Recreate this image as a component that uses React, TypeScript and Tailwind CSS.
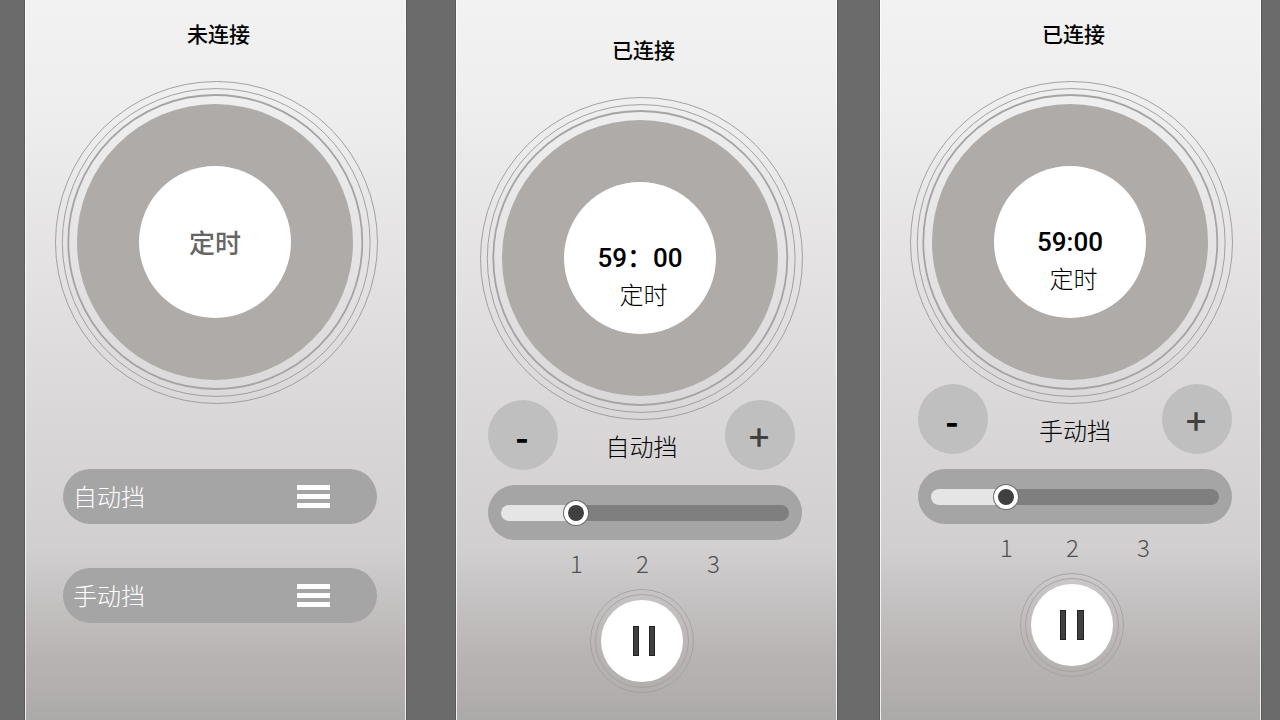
import { useState, type ReactNode } from "react";

function Screen({ title, className, children }: { title: string; className: string; children: ReactNode }) {
  return (
    <section
      className={`min-w-0 flex-1 border-x border-white/80 bg-[linear-gradient(to_bottom,#f2f2f2_0%,#eeeeee_15%,#e5e3e4_35%,#d9d7d8_58%,#d1cfd0_76%,#c9c6c7_81%,#b8b4b3_91%,#acaaa9_100%)] shadow-[0_0_0_1px_#5a5a5a] ${className}`}
    >
      <h1 className="mb-8 pl-1 text-center text-[21px] leading-8 font-medium text-black">{title}</h1>
      {children}
    </section>
  );
}

function Dial({ children }: { children: ReactNode }) {
  return (
    <div className="mx-auto grid w-[323px]">
      <svg viewBox="0 0 323 323" className="col-start-1 row-start-1 block w-full" fill="none" aria-hidden="true">
        <circle cx="161.5" cy="161.5" r="161" stroke="#9a9898" strokeWidth="0.9" />
        <circle cx="161.2" cy="161.5" r="153.9" stroke="#9a9898" strokeWidth="0.9" />
        <circle cx="160.3" cy="161" r="147" stroke="#a5a3a3" strokeWidth="1.8" />
        <circle cx="160" cy="161" r="138" fill="#aeaba9" />
        <circle cx="160" cy="161" r="76" fill="#ffffff" />
      </svg>
      <div className="col-start-1 row-start-1 flex flex-col items-center pt-[143px] pr-[3px] text-[26px] leading-9">
        {children}
      </div>
    </div>
  );
}

function ModeButton({ label }: { label: string }) {
  return (
    <button
      type="button"
      className="flex h-[55px] w-full items-center justify-between rounded-full bg-[#a5a5a5] pr-[47px] pl-2.5 text-2xl font-light text-white"
    >
      <span className="pb-0.5">{label}</span>
      <svg viewBox="0 0 33 23" className="h-[23px] w-[33px]" fill="#ffffff" aria-hidden="true">
        <rect width="33" height="5" />
        <rect y="9" width="33" height="5" />
        <rect y="18" width="33" height="5" />
      </svg>
    </button>
  );
}

function RoundButton({ label, children, className }: { label: string; children: ReactNode; className: string }) {
  return (
    <button
      type="button"
      aria-label={label}
      className={`flex size-[70px] items-center justify-center rounded-full bg-[#bfbfbf] pr-0.5 text-4xl ${className}`}
    >
      {children}
    </button>
  );
}

function LevelSlider() {
  const [level, setLevel] = useState(24);
  const stop = `calc(12px + (100% - 24px) * ${level / 100})`;
  return (
    <div className="flex h-[55px] items-center rounded-full bg-[#a5a5a5] px-[13px]">
      <input
        type="range"
        aria-label="挡位"
        min={0}
        max={100}
        value={level}
        onChange={(e) => setLevel(Number(e.target.value))}
        style={{ backgroundImage: `linear-gradient(to right, #e6e5e5 ${stop}, #7f7f7f ${stop})` }}
        className="h-4 w-full appearance-none rounded-full [&::-webkit-slider-thumb]:size-6 [&::-webkit-slider-thumb]:appearance-none [&::-webkit-slider-thumb]:rounded-full [&::-webkit-slider-thumb]:border-4 [&::-webkit-slider-thumb]:border-solid [&::-webkit-slider-thumb]:border-white [&::-webkit-slider-thumb]:bg-[#404040] [&::-webkit-slider-thumb]:shadow-[0_0_0_1px_#6b6b6b]"
      />
    </div>
  );
}

function PauseButton({ bars }: { bars: { x: number; width: number }[] }) {
  return (
    <button type="button" aria-label="暂停" className="mx-auto mt-2.5 block rounded-full">
      <svg viewBox="0 0 104 104" className="block size-[104px]" fill="none" aria-hidden="true">
        <circle cx="52" cy="52" r="51.5" stroke="#a09d9d" strokeWidth="0.8" />
        <circle cx="52" cy="52" r="46.5" stroke="#a09d9d" strokeWidth="0.8" />
        <circle cx="52" cy="52" r="41" fill="#ffffff" />
        {bars.map((bar) => (
          <rect key={bar.x} x={bar.x} y="37.5" width={bar.width} height="29" fill="#404040" stroke="#222222" />
        ))}
      </svg>
    </button>
  );
}

function Controls({ mode, plusClass }: { mode: string; plusClass: string }) {
  return (
    <div className="-mt-5 pr-px pl-2">
      <div className="flex justify-between">
        <RoundButton label="减" className="font-bold text-black">
          -
        </RoundButton>
        <span className="self-end pb-2 text-2xl leading-8 font-light text-black">{mode}</span>
        <RoundButton label="加" className={`font-medium text-[#404040] ${plusClass}`}>
          +
        </RoundButton>
      </div>
      <div className="mt-[15px]">
        <LevelSlider />
      </div>
      <div className="mt-[7px] flex pl-[82px] text-2xl leading-8 font-light text-[#505050]">
        <span className="w-[14px]">1</span>
        <span className="ml-[52px] w-[14px]">2</span>
        <span className="ml-[57px] w-[14px]">3</span>
      </div>
    </div>
  );
}

export default function App() {
  return (
    <main className="flex min-h-screen bg-[#6b6b6b] pr-[19px] pl-[25px] font-['Noto_Sans_CJK_SC',sans-serif]">
      <Screen title="未连接" className="pt-[17px] pr-[27px] pl-[29px]">
        <Dial>
          <span className="font-medium text-[#666666]">定时</span>
        </Dial>
        <div className="mt-[65px] flex flex-col gap-11 pr-px pl-2">
          <ModeButton label="自动挡" />
          <ModeButton label="手动挡" />
        </div>
      </Screen>
      <Screen title="已连接" className="ml-[50px] pt-[33px] pr-[33px] pl-[23px]">
        <Dial>
          <time className="font-['Roboto','Noto_Sans_CJK_SC',sans-serif] font-medium text-black">59：00</time>
          <span className="pl-[7px] text-2xl leading-9 font-light text-black">定时</span>
        </Dial>
        <Controls mode="自动挡" plusClass="mr-[7px]" />
        <PauseButton
          bars={[
            { x: 43.5, width: 5 },
            { x: 59.5, width: 5 },
          ]}
        />
      </Screen>
      <Screen title="已连接" className="ml-[43px] pt-[17px] pr-[27px] pl-[29px]">
        <Dial>
          <time className="font-['Roboto','Noto_Sans_CJK_SC',sans-serif] font-medium text-black">59:00</time>
          <span className="pl-[7px] text-2xl leading-9 font-light text-black">定时</span>
        </Dial>
        <Controls mode="手动挡" plusClass="" />
        <PauseButton
          bars={[
            { x: 40.5, width: 5 },
            { x: 57.5, width: 6 },
          ]}
        />
      </Screen>
    </main>
  );
}
